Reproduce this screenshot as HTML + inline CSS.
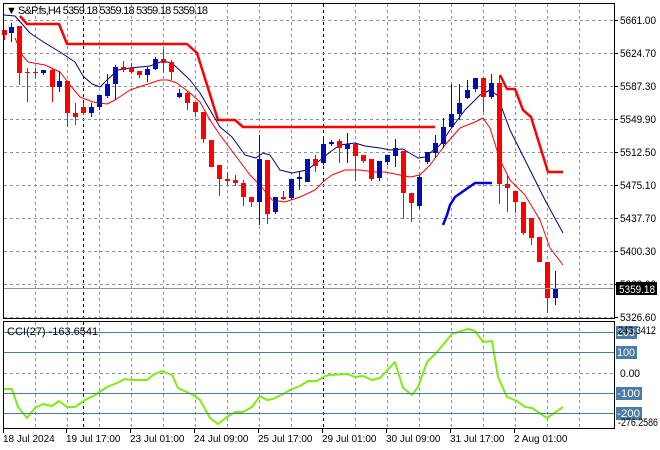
<!DOCTYPE html>
<html><head><meta charset="utf-8"><style>
html,body{margin:0;padding:0;background:#fff;}
svg{display:block;font-family:"Liberation Sans",sans-serif;}
</style></head><body>
<svg id="s" width="660" height="450" viewBox="0 0 660 450" xmlns="http://www.w3.org/2000/svg">
<rect width="660" height="450" fill="#fff"/>
<g id="grid" stroke="#8a94a0" stroke-width="1" stroke-dasharray="3,3"></g>
<g id="cci" fill="none"></g>
<g id="lines" fill="none"></g>
<g id="candles"></g>
<g id="lbl" font-size="11" fill="#000"></g>
<rect x="3.5" y="3.5" width="611" height="315" fill="none" stroke="#000"/>
<rect x="3.5" y="321.5" width="611" height="107" fill="none" stroke="#000"/>
<text x="6" y="14" font-size="11">▼</text>
<text x="18" y="14" font-size="11" textLength="190" lengthAdjust="spacing">S&amp;P.fs,H4  5359.18 5359.18 5359.18 5359.18</text>
<text x="7" y="335" font-size="11">CCI(27) -163.6541</text>
</svg>
<script>
var NS="http://www.w3.org/2000/svg";
function el(p,t,a){var e=document.createElementNS(NS,t);for(var k in a)e.setAttribute(k,a[k]);document.getElementById(p).appendChild(e);return e;}
for(var x=35;x<=579;x+=32){if(x==83||x==323)continue;el("grid","line",{x1:x+.5,y1:4,x2:x+.5,y2:318});el("grid","line",{x1:x+.5,y1:322,x2:x+.5,y2:428});}
[83,323].forEach(function(x){el("grid","line",{x1:x+.5,y1:4,x2:x+.5,y2:428,stroke:"#000"});});
var py=[20,53,86,119,152,185,218,251,284,317],pl=["5661.00","5624.70","5587.30","5549.90","5512.50","5475.10","5437.70","5400.30","5363.00","5326.60"];
py.forEach(function(y,i){el("grid","line",{x1:4,y1:y+.5,x2:614,y2:y+.5});el("lbl","line",{x1:614,y1:y+.5,x2:618,y2:y+.5,stroke:"#000"});var t=el("lbl","text",{x:620,y:y+4,textLength:36,lengthAdjust:"spacingAndGlyphs"});t.textContent=pl[i];});
el("grid","line",{x1:4,y1:373.5,x2:614,y2:373.5});
[332,352,393,413].forEach(function(y){el("lbl","line",{x1:4,y1:y+.5,x2:614,y2:y+.5,stroke:"#4a7ca8"});});
el("lbl","line",{x1:4,y1:288.5,x2:614,y2:288.5,stroke:"#8a949c"});
el("lbl","rect",{x:616,y:282,width:41,height:13,fill:"#000"});
var t=el("lbl","text",{x:619,y:293,fill:"#fff",textLength:36,lengthAdjust:"spacingAndGlyphs"});t.textContent="5359.18";
[[332,"200"],[352,"100"],[393,"-100"],[413,"-200"]].forEach(function(a){el("lbl","rect",{x:616,y:a[0]-6,width:a[1].length*5+6,height:13,fill:"#4a7ca8"});var t=el("lbl","text",{x:617,y:a[0]+4,fill:"#fff",textLength:a[1].length*5+3,lengthAdjust:"spacingAndGlyphs"});t.textContent=a[1];});
t=el("lbl","text",{x:620,y:377,textLength:20,lengthAdjust:"spacingAndGlyphs"});t.textContent="0.00";
t=el("lbl","text",{x:618,y:334,textLength:38,lengthAdjust:"spacingAndGlyphs"});t.textContent="243.3412";
t=el("lbl","text",{x:618,y:426,textLength:40,lengthAdjust:"spacingAndGlyphs"});t.textContent="-276.2586";
[[3,"18 Jul 2024"],[66,"19 Jul 17:00"],[130,"23 Jul 01:00"],[194,"24 Jul 09:00"],[258,"25 Jul 17:00"],[322,"29 Jul 01:00"],[386,"30 Jul 09:00"],[450,"31 Jul 17:00"],[514,"2 Aug 01:00"]].forEach(function(a){t=el("lbl","text",{x:a[0],y:442,"font-size":"10"});t.textContent=a[1];el("lbl","line",{x1:a[0]+.5,y1:429,x2:a[0]+.5,y2:433,stroke:"#000"});});
function pl2(p,c,w){el("lines","polyline",{points:p.map(function(q){return q.join(",")}).join(" "),stroke:c,"stroke-width":w,"stroke-linejoin":"round"});}
pl2([[20,16],[27,24],[59,24],[67,44],[187,44],[197,53],[218,120],[235,120],[243,127],[435,127]],"#f00",2.5);
pl2([[500,75],[507,89],[515,89],[523,110],[531,117],[548,172],[563,172]],"#f00",2.5);
pl2([[4,15],[15,16],[23,25],[30,33],[45,43],[60,52],[75,62],[83,76],[92,84],[100,87],[107,80],[118,70],[130,68],[150,66],[163,61],[172,63],[190,80],[200,93],[210,110],[220,127],[232,137],[245,155],[256,158],[263,153],[270,155],[280,170],[292,173],[307,170],[323,158],[330,152],[340,145],[355,143],[365,146],[380,148],[390,150],[403,149],[418,158],[425,157],[440,145],[450,130],[465,110],[480,95],[490,90],[497,95],[510,130],[530,170],[545,200],[563,233]],"#00007a",1);
pl2([[15,38],[22,55],[28,62],[45,65],[60,72],[70,85],[80,97],[93,102],[107,104],[115,100],[130,90],[145,85],[160,80],[168,80],[177,83],[190,93],[200,102],[210,120],[220,135],[235,155],[250,175],[260,185],[272,200],[285,202],[300,197],[315,190],[325,180],[332,175],[345,170],[360,170],[375,172],[385,172],[400,175],[410,177],[420,175],[430,165],[445,145],[460,128],[475,122],[483,118],[490,128],[500,160],[510,180],[525,195],[540,220],[550,248],[563,265]],"#f00",1);
pl2([[443,225],[447,215],[450,205],[455,197],[465,190],[475,183],[492,183]],"#0000e0",2.5);
el("cci","polyline",{points:"4,389 12,389 18,407 27,418 35,408 43,404 52,406 59,401 67,407 75,407 85,400 95,395 107,387 117,383 125,379 132,380 147,380 153,375 162,371 172,375 178,388 193,395 200,400 210,418 218,424 227,417 235,412 243,412 252,407 260,396 267,400 273,399 283,394 292,389 300,386 308,381 317,381 325,376 330,375 347,374 355,377 363,376 372,380 380,378 395,362 403,388 412,395 418,387 427,362 437,352 452,334 458,332 468,329 475,331 483,342 492,341 498,377 507,397 517,401 525,407 532,408 547,418 563,407",stroke:"#7fec10","stroke-width":2,"stroke-linejoin":"round"});
var C=[[4,30,35,30,40,"r"],[11,27,33,23,42,"b"],[19,26,73,26,85,"r"],[27,72,73,68,102,"r"],[35,72,73,68,78,"r"],[43,70,73,70,75,"b"],[52,70,87,68,102,"r"],[59,81,87,71,92,"b"],[67,81,113,81,127,"r"],[75,113,117,103,125,"r"],[83,107,113,103,115,"r"],[91,107,113,103,117,"b"],[99,95,107,95,110,"b"],[107,84,96,74,98,"b"],[115,67,84,65,100,"b"],[123,67,70,61,72,"r"],[131,68,72,63,74,"r"],[139,71,75,71,78,"r"],[147,69,75,67,82,"b"],[155,59,69,57,70,"b"],[163,59,63,49,73,"r"],[171,62,72,60,80,"r"],[179,93,97,89,98,"b"],[187,93,103,91,110,"r"],[195,102,112,102,117,"r"],[203,112,139,112,143,"r"],[211,140,167,140,167,"r"],[219,165,179,165,196,"r"],[227,179,181,172,185,"r"],[235,180,183,175,186,"r"],[243,183,197,180,206,"r"],[251,197,202,197,207,"r"],[259,159,202,135,225,"b"],[267,160,214,160,224,"r"],[275,197,212,197,214,"b"],[283,197,199,191,200,"r"],[291,179,198,179,200,"b"],[299,177,179,171,190,"b"],[307,159,182,159,182,"b"],[315,159,166,155,172,"r"],[323,144,163,137,165,"b"],[331,142,144,140,146,"b"],[339,141,148,139,163,"r"],[347,144,149,133,163,"b"],[355,144,156,144,181,"r"],[363,155,161,155,163,"r"],[371,159,179,159,181,"r"],[379,161,178,161,181,"b"],[387,155,162,155,165,"b"],[395,148,156,139,167,"b"],[403,151,193,151,219,"r"],[411,193,203,193,222,"r"],[419,177,206,175,209,"b"],[427,152,162,152,164,"b"],[435,143,153,135,158,"b"],[443,127,144,118,148,"b"],[451,114,127,84,128,"b"],[459,103,114,84,120,"b"],[467,90,98,80,99,"b"],[475,78,89,78,92,"b"],[483,78,97,78,112,"r"],[491,83,97,74,99,"b"],[499,83,184,75,204,"r"],[507,184,188,176,212,"r"],[515,191,202,191,213,"r"],[523,202,233,202,235,"r"],[531,218,238,218,245,"r"],[539,237,262,237,262,"r"],[547,262,298,262,313,"r"],[555,288,298,271,305,"b"]];
C.forEach(function(c){var col=c[5]=="r"?"#f00":"#0010b0";el("candles","line",{x1:c[0]+.5,y1:c[3],x2:c[0]+.5,y2:c[4],stroke:col});el("candles","rect",{x:c[0]-2,y:c[1],width:5,height:Math.max(1,c[2]-c[1]),fill:col});});
</script>
</body></html>
